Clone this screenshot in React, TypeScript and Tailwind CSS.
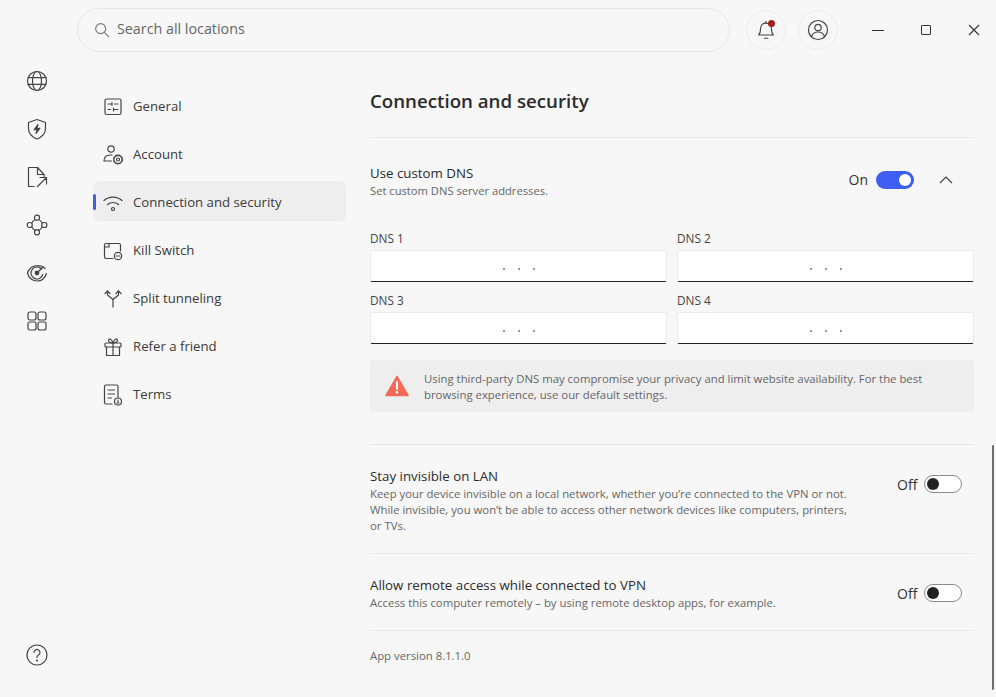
import React from "react";

const font = { fontFamily: '"Open Sans", sans-serif' };

function Ico({ size = 24, children }: { size?: number; children: React.ReactNode }) {
  return (
    <svg width={size} height={size} viewBox="0 0 24 24" fill="none" stroke="#444" strokeWidth="1.2" strokeLinecap="round" strokeLinejoin="round" className="shrink-0">
      {children}
    </svg>
  );
}

const railIcons = [
  <Ico key="globe">
    <circle cx="12" cy="12" r="9.5" />
    <ellipse cx="12" cy="12" rx="4.5" ry="9.5" />
    <path d="M3 8.7h18M3 15.3h18" />
  </Ico>,
  <Ico key="shield">
    <path d="M12 2.5l8.5 3v6c0 5-3.5 8.5-8.5 10.5-5-2-8.5-5.5-8.5-10.5v-6z" />
    <path d="M13 7.5l-3.8 5.2h3l-1.2 3.8 3.8-5.2h-3z" fill="#444" />
  </Ico>,
  <Ico key="file">
    <path d="M9 21.5H3.5v-19h9l6.5 7v2" />
    <path d="M12.5 2.5v7h6.5" />
    <path d="M12.5 21.5l9-9M15 12.5h6.5V19" />
  </Ico>,
  <Ico key="nodes">
    <circle cx="12" cy="12" r="5.5" />
    <rect x="9.5" y="2.2" width="5" height="5" rx="2.2" fill="#f7f7f7" />
    <rect x="9.5" y="16.8" width="5" height="5" rx="2.2" fill="#f7f7f7" />
    <rect x="2.2" y="9.5" width="5" height="5" rx="2.2" fill="#f7f7f7" />
    <rect x="16.8" y="9.5" width="5" height="5" rx="2.2" fill="#f7f7f7" />
  </Ico>,
  <Ico key="target">
    <path d="M20 7.5A10 10 0 0 0 12.5 4.5C7.5 4.5 3.5 8 2.5 12c1 4.5 5 8 9.5 8 4.5 0 8-3 9.5-7.5" />
    <path d="M16.5 8A6 6 0 1 0 17.8 13.5" />
    <circle cx="12" cy="12" r="1.8" fill="#444" />
    <path d="M13 11l5-5" />
  </Ico>,
  <Ico key="grid">
    <rect x="3" y="3" width="8" height="8" rx="2" />
    <rect x="13" y="3" width="8" height="8" rx="2" />
    <rect x="3" y="13" width="8" height="8" rx="2" />
    <rect x="13" y="13" width="8" height="8" rx="2" />
  </Ico>,
];

const navItems: { label: string; active?: boolean; icon: React.ReactNode }[] = [
  {
    label: "General",
    icon: (
      <Ico>
        <rect x="4" y="4" width="16" height="15.5" rx="1.5" />
        <path d="M7 9h3.5M13.5 9H17M11 7.5v3M7 14.5h2.5M12.5 14.5H17M12.5 13v3" />
      </Ico>
    ),
  },
  {
    label: "Account",
    icon: (
      <Ico>
        <circle cx="10" cy="6" r="3.2" />
        <path d="M3 18c0-3.5 2.5-5.8 6-6h2M3 18h7.5" />
        <circle cx="17" cy="16.5" r="1.5" />
        <circle cx="17" cy="16.5" r="4.2" strokeWidth="1.6" strokeDasharray="2 1.3" />
      </Ico>
    ),
  },
  {
    label: "Connection and security",
    active: true,
    icon: (
      <Ico>
        <path d="M3 9.5c5-4.5 13-4.5 18 0M6.5 13.5c3-2.7 8-2.7 11 0" />
        <circle cx="12" cy="18" r="1.5" />
      </Ico>
    ),
  },
  {
    label: "Kill Switch",
    icon: (
      <Ico>
        <path d="M12 19.5H5A1.5 1.5 0 0 1 3.5 18V6A1.5 1.5 0 0 1 5 4.5h13A1.5 1.5 0 0 1 19.5 6v6" />
        <path d="M3.5 8H8V4.5" />
        <circle cx="17" cy="17" r="3.7" />
        <path d="M15 17h4" />
      </Ico>
    ),
  },
  {
    label: "Split tunneling",
    icon: (
      <Ico>
        <path d="M12 20v-7.5L6.5 8V4M12 12.5L17.5 8V4" />
        <path d="M4 6.5L6.5 4 9 6.5M15 6.5L17.5 4 20 6.5" />
      </Ico>
    ),
  },
  {
    label: "Refer a friend",
    icon: (
      <Ico>
        <rect x="4" y="8" width="16" height="4" rx="1" />
        <path d="M5.5 12v8.5h13V12M12 8v12.5" />
        <path d="M12 8C10 8 7.5 7.5 7.5 5.3 7.5 3.5 10.5 3 12 8zM12 8c2 0 4.5-.5 4.5-2.7 0-1.8-3-2.3-4.5 2.7z" />
      </Ico>
    ),
  },
  {
    label: "Terms",
    icon: (
      <Ico>
        <path d="M11 21H5a1.5 1.5 0 0 1-1.500-1.500v-16A1.500 1.500 0 0 1 5 2h10.500A1.500 1.500 0 0 1 17 3.500V14" />
        <path d="M7 7h6.500M7 11h6.500M7 15h3.500" />
        <circle cx="17" cy="18.500" r="3.500" />
        <path d="M17 17v2.500M16 20h2" strokeWidth="1" />
      </Ico>
    ),
  },
];

function IpField() {
  return (
    <div className="flex h-[32px] items-center justify-center gap-[13px] rounded-[2px] border border-[#ebebeb] border-b-[#222] bg-white">
      <span className="mt-[5px] h-[2px] w-[2px] rounded-full bg-[#777]" />
      <span className="mt-[5px] h-[2px] w-[2px] rounded-full bg-[#777]" />
      <span className="mt-[5px] h-[2px] w-[2px] rounded-full bg-[#777]" />
    </div>
  );
}

function DnsField({ label }: { label: string }) {
  return (
    <div>
      <div className="mb-[3px] h-[18px] text-[11.8px] leading-[18px] text-[#444]">{label}</div>
      <IpField />
    </div>
  );
}

function OffSwitch() {
  return (
    <div className="flex w-[65px] items-center justify-between">
      <span className="mt-[2px] text-[14px] text-[#333]">Off</span>
      <div className="flex h-[18px] w-[38px] items-center rounded-full border border-[#8a8a8a] bg-white pl-[2px]">
        <span className="h-[12px] w-[12px] rounded-full bg-[#222]" />
      </div>
    </div>
  );
}

export default function App() {
  return (
    <div style={font} className="relative flex h-[697px] w-[996px] overflow-hidden bg-[#f7f7f7] text-[#333]">
      {/* Left rail */}
      <aside className="flex w-[74px] shrink-0 flex-col items-center pt-[57px] pb-[18px]">
        {railIcons.map((icon, i) => (
          <div key={i} className="flex h-12 items-center justify-center">
            {icon}
          </div>
        ))}
        <div className="mt-auto flex h-12 items-center justify-center">
          <Ico>
            <circle cx="12" cy="12" r="10" />
            <path d="M9 9.5a3 3 0 1 1 4.5 2.600c-1 .6-1.500 1.200-1.500 2.400" />
            <circle cx="12" cy="17.5" r=".5" fill="#444" />
          </Ico>
        </div>
      </aside>

      <div className="flex min-w-0 flex-1 flex-col">
        {/* Top bar */}
        <header className="flex h-[60px] shrink-0 items-center">
          <label className="ml-[3px] flex h-[44px] w-[653px] items-center gap-[7px] rounded-full border border-[#e8e8e8] pl-[16px]">
            <svg width="16" height="16" viewBox="0 0 24 24" fill="none" stroke="#777" strokeWidth="1.7" strokeLinecap="round">
              <circle cx="10" cy="10" r="7.5" />
              <path d="M15.5 15.5L22 22" />
            </svg>
            <span className="mb-[2px] text-[14.3px] text-[#666]">Search all locations</span>
          </label>
          <button className="relative ml-[16px] flex h-[40px] w-[40px] items-center justify-center rounded-full border border-[#ebebeb]">
            <Ico size={22}>
              <path d="M4 17.5c1.800-1.500 2-3.500 2-6.500 0-4 2.500-6.500 6-6.500s6 2.500 6 6.500c0 3 .2 5 2 6.500z" />
              <path d="M10 21h4M12 2.5v2" />
            </Ico>
            <span className="absolute left-[21px] top-[9px] h-[7px] w-[7px] rounded-full bg-[#a61e1e]" />
          </button>
          <button className="ml-[12px] flex h-[40px] w-[40px] items-center justify-center rounded-full border border-[#ebebeb]">
            <Ico>
              <circle cx="12" cy="12" r="9.5" />
              <circle cx="12" cy="9.5" r="3.2" />
              <path d="M5.5 18.5c1-3 3.500-4.500 6.500-4.500s5.500 1.500 6.500 4.500" />
            </Ico>
          </button>
          <div className="ml-[34px] flex h-[44px] items-center gap-[37px]">
            <span className="h-[1px] w-[12px] bg-[#333]" />
            <span className="h-[10px] w-[10px] rounded-[1px] border border-[#333]" />
            <svg width="12" height="12" viewBox="0 0 12 12" stroke="#333" strokeWidth="1.1">
              <path d="M1 1l10 10M11 1L1 11" />
            </svg>
          </div>
        </header>

        <div className="flex flex-1">
          {/* Settings nav */}
          <nav className="ml-[19px] w-[253px] shrink-0 pt-[22px]">
            {navItems.map((item) => (
              <div key={item.label} className="flex h-12 items-start pt-[3px]">
                <div className={`relative flex h-[40px] w-full items-center gap-[8px] rounded-[6px] pl-[8px] pt-[4px] ${item.active ? "bg-[#eeeeee]" : ""}`}>
                  {item.active && <span className="absolute left-0 top-[13px] h-[16px] w-[3px] rounded-full bg-[#3f5fdc]" />}
                  {item.icon}
                  <span className="text-[13.2px] text-[#3a3a3a]">{item.label}</span>
                </div>
              </div>
            ))}
          </nav>

          {/* Main settings */}
          <main className="ml-[24px] w-[604px] shrink-0">
            <h1 className="pt-[26px] pb-[21px] text-[18.7px] font-semibold leading-[30px] text-[#2b2b2b]">Connection and security</h1>

            <section className="border-t border-[#e8e8e8] pt-[26px] pb-[32px]">
              <div className="flex items-start justify-between">
                <div>
                  <div className="text-[13.3px] leading-[18px] text-[#2b2b2b]">Use custom DNS</div>
                  <div className="mt-[1px] text-[11.2px] leading-[15px] text-[#666]">Set custom DNS server addresses.</div>
                </div>
                <div className="mt-[5px] flex items-center">
                  <span className="text-[14px] text-[#333]">On</span>
                  <div className="ml-[8px] flex h-[18px] w-[38px] items-center justify-end rounded-full bg-[#3d5ef0] pr-[3px]">
                    <span className="h-[12px] w-[12px] rounded-full bg-white" />
                  </div>
                  <svg className="ml-[25px] mr-[21px]" width="14" height="8" viewBox="0 0 14 8" fill="none" stroke="#444" strokeWidth="1.2">
                    <path d="M1 7l6-6 6 6" />
                  </svg>
                </div>
              </div>

              <div className="mt-[31px] grid grid-cols-2 gap-x-[10px] gap-y-[9px]">
                <DnsField label="DNS 1" />
                <DnsField label="DNS 2" />
                <DnsField label="DNS 3" />
                <DnsField label="DNS 4" />
              </div>

              <div className="mt-[16px] flex h-[52px] items-center gap-[15px] rounded-[4px] bg-[#eeeeee] pl-[15px]">
                <svg width="24" height="22" viewBox="0 0 24 22" className="shrink-0">
                  <path d="M12 1.5L23 20.5H1z" fill="#f46a57" stroke="#f46a57" strokeWidth="1.5" strokeLinejoin="round" />
                  <path d="M12 7v7" stroke="#fff" strokeWidth="2" strokeLinecap="round" />
                  <circle cx="12" cy="17.3" r="1.2" fill="#fff" />
                </svg>
                <p className="mt-[2px] text-[11.35px] leading-[16px] text-[#666]">
                  Using third-party DNS may compromise your privacy and limit website availability. For the best
                  <br />
                  browsing experience, use our default settings.
                </p>
              </div>
            </section>

            <section className="flex h-[109px] items-start justify-between border-t border-[#e8e8e8] pt-[22px]">
              <div>
                <div className="text-[13.3px] leading-[18px] text-[#2b2b2b]">Stay invisible on LAN</div>
                <p className="mt-[1px] text-[11.35px] leading-[16px] text-[#666]">
                  Keep your device invisible on a local network, whether you’re connected to the VPN or not.
                  <br />
                  While invisible, you won’t be able to access other network devices like computers, printers,
                  <br />
                  or TVs.
                </p>
              </div>
              <div className="mr-[12px] mt-[5px]">
                <OffSwitch />
              </div>
            </section>

            <section className="flex h-[77px] items-start justify-between border-t border-[#e8e8e8] pt-[22px]">
              <div>
                <div className="text-[13.3px] leading-[18px] text-[#2b2b2b]">Allow remote access while connected to VPN</div>
                <p className="mt-[1px] text-[11.35px] leading-[16px] text-[#666]">Access this computer remotely – by using remote desktop apps, for example.</p>
              </div>
              <div className="mr-[12px] mt-[5px]">
                <OffSwitch />
              </div>
            </section>

            <div className="border-t border-[#e8e8e8] pt-[17px] text-[11.35px] leading-[16px] text-[#666]">App version 8.1.1.0</div>
          </main>
        </div>
      </div>

      {/* Scrollbar */}
      <div className="absolute right-[2px] top-[445px] h-[245px] w-[2px] rounded-full bg-[#6f6f6f]" />
    </div>
  );
}
